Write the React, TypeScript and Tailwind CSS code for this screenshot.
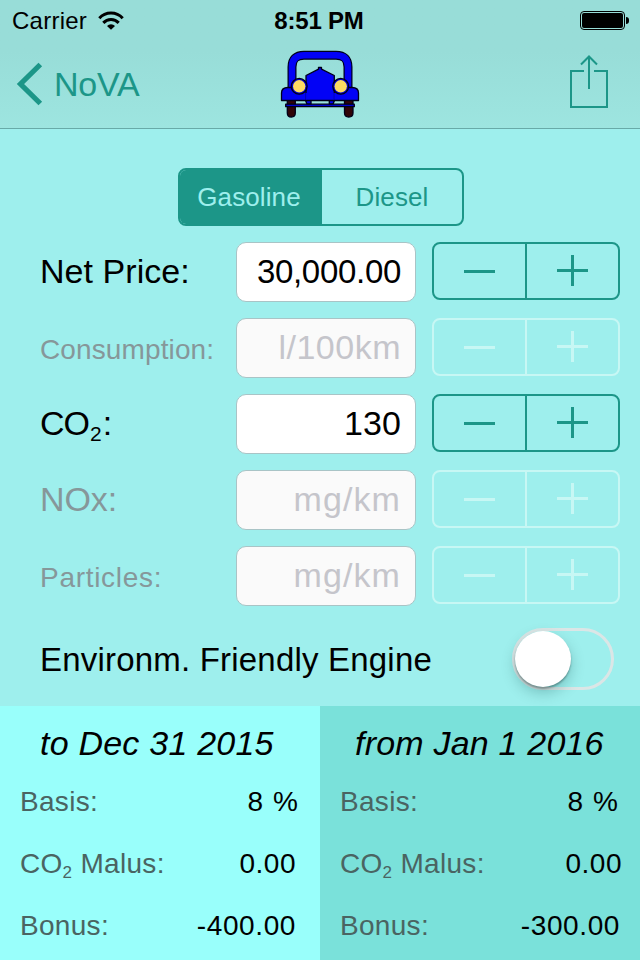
import React, { useState } from "react";

type Field = {
  label: React.ReactNode;
  labelClass: string;
  value: string;
  valueClass: string;
  enabled: boolean;
};

const fields: Field[] = [
  { label: "Net Price:", labelClass: "text-[34px] tracking-[0.05px]", value: "30,000.00", valueClass: "text-[33px] leading-[58px] tracking-[-0.3px]", enabled: true },
  { label: "Consumption:", labelClass: "text-[28px] tracking-[0.12px] pt-[3px]", value: "l/100km", valueClass: "text-[34px] leading-[56px] tracking-[0.5px]", enabled: false },
  { label: <>CO<Sub className="text-[21px] align-[-6px] ml-[1px] mr-[1px] tracking-normal" />:</>, labelClass: "text-[34px] tracking-[-1px]", value: "130", valueClass: "text-[34px] leading-[56px] tracking-[0.1px]", enabled: true },
  { label: "NOx:", labelClass: "text-[34px] tracking-[-0.1px]", value: "mg/km", valueClass: "text-[34px] leading-[56px] tracking-[1.1px]", enabled: false },
  { label: "Particles:", labelClass: "text-[28px] tracking-[0.7px] pt-[3px]", value: "mg/km", valueClass: "text-[34px] leading-[56px] tracking-[1.1px]", enabled: false },
];

function Sub({ className }: { className: string }) {
  return <span className={`leading-none ${className}`}>2</span>;
}

function Wifi() {
  return (
    <svg width="26" height="20" viewBox="0 0 26 20" fill="none" stroke="#000" strokeWidth="3">
      <path d="M1.300 7.200 A16 16 0 0 1 24.700 7.200" />
      <path d="M5.300 11.900 A10.600 10.600 0 0 1 20.700 11.900" />
      <path d="M13 18.800 L9 15 A5.600 5.600 0 0 1 17 15 Z" fill="#000" stroke="none" />
    </svg>
  );
}

function Battery() {
  return (
    <div className="flex items-center gap-px">
      <div className="h-[19px] w-[45px] rounded-[4px] border border-black p-px">
        <div className="h-full w-full rounded-[2px] bg-black" />
      </div>
      <div className="h-[7px] w-[3px] rounded-r-[3px] bg-black" />
    </div>
  );
}

function Car() {
  return (
    <svg width="80" height="70" viewBox="0 0 80 70" stroke="#000018" strokeWidth="1.3" strokeLinejoin="round">
      <path d="M7.300 50h8v13q0 4-4 4t-4-4z" fill="#300408" />
      <path d="M64.500 50h8.500v13q0 4-4.200 4t-4.300-4z" fill="#300408" />
      {/* roof and windscreen frame */}
      <path fill="none" stroke="#000018" strokeWidth="9" d="M12 42V17Q12 5.200 24 5.200H56Q68 5.200 68 17V42" />
      <path fill="none" stroke="#0202f6" strokeWidth="6.600" d="M12 42V17Q12 5.200 24 5.200H56Q68 5.200 68 17V42" />
      {/* bumper and its brackets */}
      <path fill="#0202f6" d="M25 49L27 54.200H31V49Z" />
      <path fill="#0202f6" d="M55 49L53 54.200H49.300V49Z" />
      <rect x="5.700" y="54.200" width="68.600" height="2.500" fill="#0202d0" />
      {/* fenders */}
      <path fill="#0202f6" d="M1.500 50.500V43Q1.500 37.500 8 37.500H27V50.500Z" />
      <path fill="#0202f6" d="M78.500 50.500V43Q78.500 37.500 72 37.500H53V50.500Z" />
      {/* grille */}
      <path fill="#0202f6" d="M26 50.500V25.500L38.500 19.200V17.500H41.500V19.200L54.300 25.500V50.500Z" />
      <path fill="none" stroke="#0202f6" strokeWidth="1.500" d="M26.200 43V49.800M54.100 43V49.800" />
      <circle cx="19.200" cy="36.300" r="7.900" fill="#0000d0" />
      <circle cx="60.700" cy="36.300" r="7.900" fill="#0000d0" />
      <circle cx="19.200" cy="36.300" r="6.200" fill="#fddb62" stroke="none" />
      <circle cx="60.700" cy="36.300" r="6.200" fill="#fddb62" stroke="none" />
    </svg>
  );
}

function Stepper({ enabled }: { enabled: boolean }) {
  return (
    <div className={`flex h-[58px] w-[188px] rounded-[8px] border-2 ${enabled ? "border-[#1c9688] text-[#1c9688]" : "border-[#c7f7f4] text-[#c7f7f4]"}`}>
      <button disabled={!enabled} aria-label="Decrease" className="flex w-[93px] justify-start border-r-2 border-current pt-[26px] pl-[30px]">
        <span className="h-[3px] w-[31px] bg-current" />
      </button>
      <button disabled={!enabled} aria-label="Increase" className="flex flex-1 justify-center pt-[11px]">
        <svg width="31" height="31" viewBox="0 0 31 31" fill="currentColor">
          <path d="M14 0h3v14h14v3H17v14h-3V17H0v-3h14z" />
        </svg>
      </button>
    </div>
  );
}

function Row({ label, children, valueClass }: { label: React.ReactNode; children: string; valueClass: string }) {
  return (
    <div className="flex h-[62px] items-center justify-between pl-5 text-[28px] leading-[62px]">
      <span className="tracking-[0.3px] text-[#4a6462]">{label}</span>
      <span className={valueClass}>{children}</span>
    </div>
  );
}

const malus = <>CO<Sub className="text-[17px] align-[-5px]" /> Malus:</>;

export default function App() {
  const [fuel, setFuel] = useState("Gasoline");
  const [friendly, setFriendly] = useState(false);
  return (
    <div className="flex h-[960px] w-[640px] flex-col overflow-hidden bg-[#9eefed] font-['Liberation_Sans',Arial,sans-serif] text-black">
      <header className="h-[129px] border-b border-[#68aaa8] bg-linear-to-b from-[#98ddd8] from-40% to-[#9de5e0]">
        <div className="grid h-10 grid-cols-3 items-center pr-[11px] pl-3 text-[24px] leading-[41px]">
          <div className="flex items-center gap-[11px]">
            <span className="tracking-[0.25px]">Carrier</span>
            <Wifi />
          </div>
          <span className="pr-[3px] text-center font-bold tracking-[-0.2px]">8:51 PM</span>
          <div className="flex justify-end"><Battery /></div>
        </div>
        <div className="grid h-[88px] grid-cols-3 pr-8 pl-4 text-[#1c9688]">
          <button className="flex items-center gap-[10px] self-start text-[34px] leading-[88px]">
            <svg width="28" height="44" viewBox="0 0 28 44" fill="none" stroke="currentColor" strokeWidth="5.200">
              <path d="M24.300 2.500L4.500 22L24.300 41.500" />
            </svg>
            <span className="tracking-[-0.2px]">NoVA</span>
          </button>
          <div className="flex justify-center pt-[10px] pl-4"><Car /></div>
          <button aria-label="Share" className="flex justify-end pt-[15px]">
            <svg width="38" height="54" viewBox="0 0 38 54" fill="none" stroke="currentColor" strokeWidth="2">
              <path d="M14 16H1V52H37V16H24M19 34V2M11 9.500L19 1.500L27 9.500" />
            </svg>
          </button>
        </div>
      </header>

      <main className="flex h-[577px] flex-col pt-[39px]">
        <div className="ml-[178px] flex h-[58px] w-[286px] overflow-hidden rounded-[8px] border-2 border-[#1c9688] text-[26px] leading-[55px]">
          {["Gasoline", "Diesel"].map((f) => (
            <button
              key={f}
              onClick={() => setFuel(f)}
              className={`tracking-[0.1px] first:w-[142px] first:pr-1 last:flex-1 ${fuel === f ? "bg-[#1c9688] text-[#9eefed]" : "text-[#1c9688]"}`}
            >
              {f}
            </button>
          ))}
        </div>
        <div className="mt-4 flex flex-col gap-4">
          {fields.map((f, i) => (
            <div key={i} className="flex h-[60px] items-start pl-10">
              <div className={`w-[196px] whitespace-nowrap leading-[58px] ${f.labelClass} ${f.enabled ? "" : "text-[#86979a]"}`}>{f.label}</div>
              <div className={`mr-4 h-[60px] w-[180px] rounded-[10px] border border-[#a9c4c6] pr-[14px] text-right ${f.valueClass} ${f.enabled ? "bg-white" : "bg-[#fafafa] text-[#c5c5cb]"}`}>
                {f.value}
              </div>
              <Stepper enabled={f.enabled} />
            </div>
          ))}
        </div>
        <div className="mt-[22px] flex h-[62px] items-center justify-between pr-[26px] pl-10">
          <span className="pt-[2px] text-[33px] leading-[62px] tracking-[0.2px]">Environm. Friendly Engine</span>
          <button
            role="switch"
            aria-checked={friendly}
            aria-label="Environm. Friendly Engine"
            onClick={() => setFriendly(!friendly)}
            className={`flex h-[62px] w-[102px] items-center rounded-full border-3 border-[#dbe6e6] ${friendly ? "justify-end bg-[#1c9688]" : ""}`}
          >
            <span className="h-14 w-14 rounded-full bg-white shadow-[0_6px_14px_rgba(0,60,60,0.25),0_2px_2px_rgba(0,0,0,0.3)]" />
          </button>
        </div>
      </main>

      <div className="grid flex-1 grid-cols-2">
        <section className="bg-[#99fffb] pt-2">
          <h2 className="pl-10 text-[34px] leading-[58px] tracking-[0.22px] italic">to Dec 31 2015</h2>
          <div className="-mt-px">
            <Row label="Basis:" valueClass="pr-[22px] tracking-[0.1px] [word-spacing:2px]">8 %</Row>
            <Row label={malus} valueClass="pr-6 tracking-[0.5px]">0.00</Row>
            <Row label="Bonus:" valueClass="pr-6 tracking-[0.6px]">-400.00</Row>
          </div>
        </section>
        <section className="bg-[#7ae1da] pt-2">
          <h2 className="pl-[35px] text-[34px] leading-[58px] tracking-[0.2px] italic">from Jan 1 2016</h2>
          <div className="-mt-px">
            <Row label="Basis:" valueClass="pr-[22px] tracking-[0.1px] [word-spacing:2px]">8 %</Row>
            <Row label={malus} valueClass="pr-[18px] tracking-[0.5px]">0.00</Row>
            <Row label="Bonus:" valueClass="pr-5 tracking-[0.6px]">-300.00</Row>
          </div>
        </section>
      </div>
    </div>
  );
}
